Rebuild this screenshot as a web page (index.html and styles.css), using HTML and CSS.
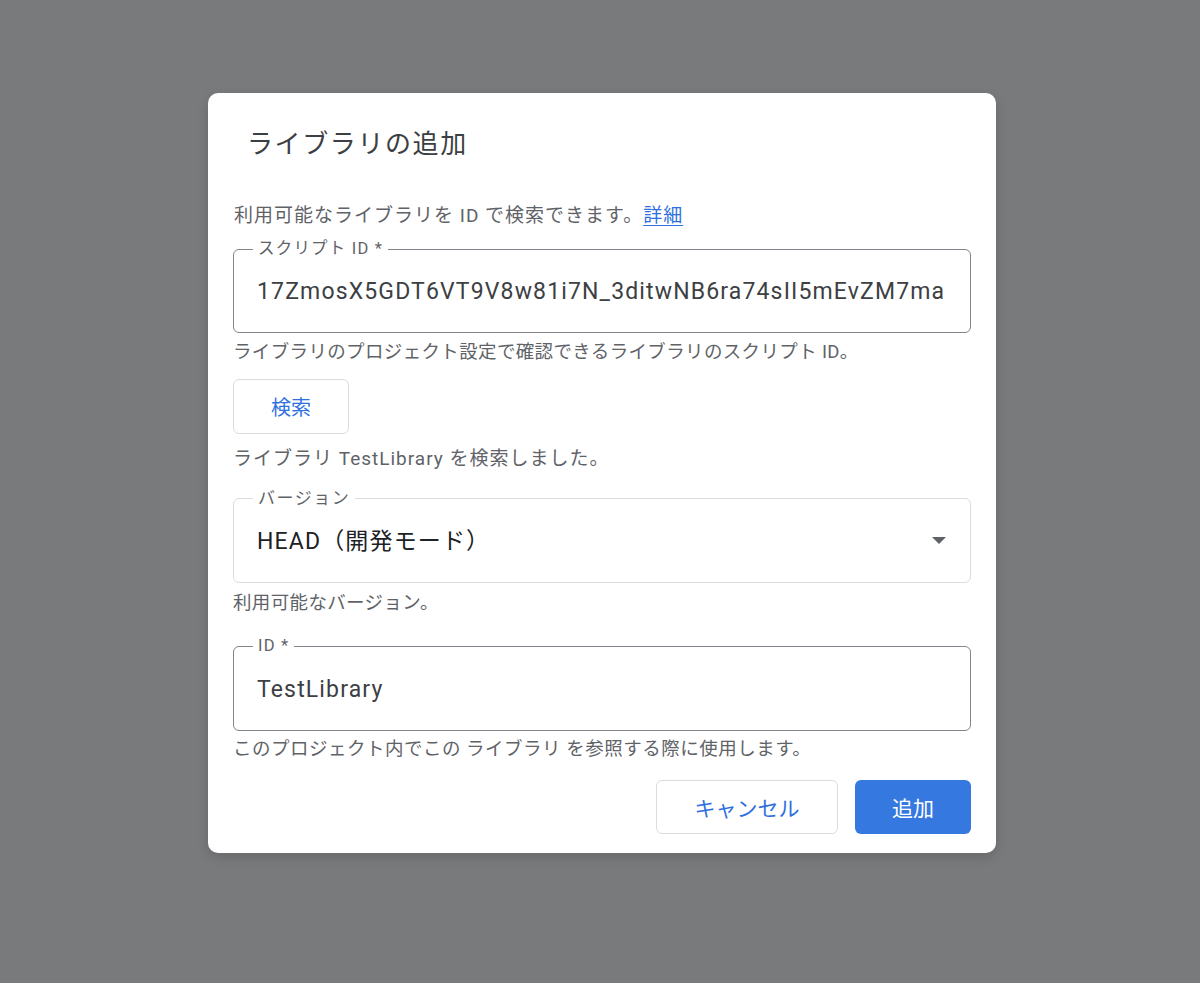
FILE: index.html
```html
<!DOCTYPE html>
<html lang="ja">
<head>
<meta charset="utf-8">
<title>ライブラリの追加</title>
<link rel="stylesheet" href="styles.css">
</head>
<body>
<div class="backdrop">
  <div class="dialog">
    <h1 class="title">ライブラリの追加</h1>
    <p class="desc">利用可能なライブラリを ID で検索できます。<a class="link" href="#">詳細</a></p>

    <div class="field field-script">
      <span class="label">スクリプト ID *</span>
      <div class="value">17ZmosX5GDT6VT9V8w81i7N_3ditwNB6ra74sII5mEvZM7map</div>
    </div>
    <p class="hint hint-1">ライブラリのプロジェクト設定で確認できるライブラリのスクリプト ID。</p>

    <button class="btn btn-outline btn-search">検索</button>
    <p class="status">ライブラリ TestLibrary を検索しました。</p>

    <div class="field field-version">
      <span class="label label-light">バージョン</span>
      <div class="value value-dark">HEAD（開発モード）</div>
      <span class="arrow"></span>
    </div>
    <p class="hint hint-2">利用可能なバージョン。</p>

    <div class="field field-id">
      <span class="label">ID *</span>
      <div class="value">TestLibrary</div>
    </div>
    <p class="hint hint-3">このプロジェクト内でこの ライブラリ を参照する際に使用します。</p>

    <div class="actions">
      <button class="btn btn-outline btn-cancel">キャンセル</button>
      <button class="btn btn-primary">追加</button>
    </div>
  </div>
</div>
</body>
</html>
```

FILE: styles.css
```css
* { box-sizing: border-box; }
html, body { margin: 0; padding: 0; }
body {
  background: #797a7c;
  font-family: Roboto, "Noto Sans CJK JP", sans-serif;
  color: #3c4043;
}
.backdrop {
  width: 1200px;
  height: 983px;
  padding-top: 93px;
  padding-left: 208px;
}
.dialog {
  width: 788px;
  height: 760px;
  background: #ffffff;
  border-radius: 10px;
  padding: 0 25px;
  display: flex;
  flex-direction: column;
  align-items: flex-start;
  box-shadow: 0 4px 12px rgba(0,0,0,0.15);
}
.title {
  margin: 35px 0 0 14px;
  font-size: 26px;
  line-height: 32px;
  font-weight: 400;
  color: #3c4043;
  letter-spacing: 1.6px;
}
.desc {
  margin: 44px 0 0 1px;
  font-size: 19px;
  line-height: 24px;
  color: #5f6368;
  letter-spacing: 1px;
}
.link {
  color: #2f6fe0;
  text-decoration: underline;
  text-underline-offset: 3px;
}
.field {
  position: relative;
  width: 738px;
  height: 84px;
  border: 1px solid #80868b;
  border-radius: 6px;
  display: flex;
  align-items: center;
  padding: 2px 24px 0 23px;
}
.field-script { margin-top: 21px; }
.field-version { margin-top: 27px; height: 85px; border-color: #dadce0; }
.field-id { margin-top: 32px; height: 85px; }
.label {
  position: absolute;
  top: -12px;
  left: 19px;
  padding: 0 5px;
  background: #ffffff;
  font-size: 16.5px;
  line-height: 22px;
  color: #5f6368;
  white-space: nowrap;
  letter-spacing: 1.2px;
}
.label-light { font-size: 17px; letter-spacing: 1.5px; }
.value {
  font-size: 23px;
  line-height: 30px;
  color: #3c4043;
  white-space: nowrap;
  overflow: hidden;
  width: 690px;
  letter-spacing: 1.15px;
}
.value-dark { color: #202124; }
.arrow {
  position: absolute;
  right: 24px;
  top: 38px;
  width: 0;
  height: 0;
  border-left: 7px solid transparent;
  border-right: 7px solid transparent;
  border-top: 7px solid #5f6368;
}
.hint {
  margin: 0;
  font-size: 18.5px;
  line-height: 22px;
  color: #5f6368;
  white-space: nowrap;
  letter-spacing: 0.35px;
}
.hint-1 { margin-top: 8px; }
.hint-2 { margin-top: 9px; }
.hint-3 { margin-top: 7px; letter-spacing: 0.5px; }
.status {
  margin: 13px 0 0 0;
  font-size: 19px;
  line-height: 24px;
  color: #5f6368;
  letter-spacing: 1px;
}
.btn {
  font-family: Roboto, "Noto Sans CJK JP", sans-serif;
  font-size: 21px;
  border-radius: 6px;
  height: 55px;
  cursor: pointer;
}
.btn-outline {
  background: #ffffff;
  border: 1.5px solid #dadce0;
  color: #2f6fe0;
}
.btn-search {
  margin-top: 16px;
  width: 116px;
  font-size: 20px;
}
.actions {
  margin-top: 20px;
  align-self: flex-end;
  display: flex;
  gap: 17px;
}
.btn-cancel { width: 182px; height: 54px; }
.btn-primary {
  width: 116px;
  height: 54px;
  background: #3478e0;
  border: none;
  color: #ffffff;
}
```
